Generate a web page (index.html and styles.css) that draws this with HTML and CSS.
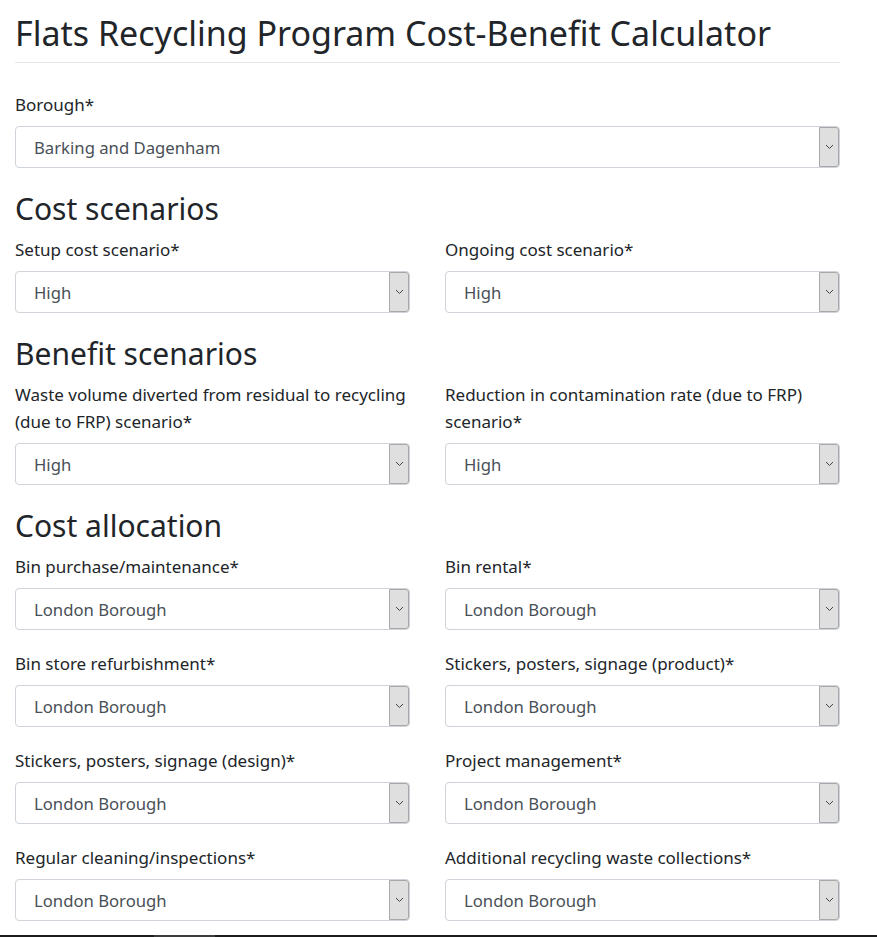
FILE: index.html
```html
<!DOCTYPE html>
<html>
<head>
<meta charset="utf-8">
<link rel="stylesheet" href="styles.css">
</head>
<body>
<div class="container">
  <h1 class="title">Flats Recycling Program Cost-Benefit Calculator</h1>
  <hr class="rule">

  <div class="field">
    <label class="label">Borough*</label>
    <div class="select"><span class="value">Barking and Dagenham</span><span class="arrow"><svg width="9" height="6" viewBox="0 0 9 6"><path d="M1 1 L4.5 4.5 L8 1" fill="none" stroke="#444" stroke-width="1"/></svg></span></div>
  </div>

  <h2 class="section">Cost scenarios</h2>
  <div class="row">
    <div class="field">
      <label class="label">Setup cost scenario*</label>
      <div class="select"><span class="value">High</span><span class="arrow"><svg width="9" height="6" viewBox="0 0 9 6"><path d="M1 1 L4.5 4.5 L8 1" fill="none" stroke="#444" stroke-width="1"/></svg></span></div>
    </div>
    <div class="field">
      <label class="label">Ongoing cost scenario*</label>
      <div class="select"><span class="value">High</span><span class="arrow"><svg width="9" height="6" viewBox="0 0 9 6"><path d="M1 1 L4.5 4.5 L8 1" fill="none" stroke="#444" stroke-width="1"/></svg></span></div>
    </div>
  </div>

  <h2 class="section">Benefit scenarios</h2>
  <div class="row">
    <div class="field">
      <label class="label">Waste volume diverted from residual to recycling (due to FRP) scenario*</label>
      <div class="select"><span class="value">High</span><span class="arrow"><svg width="9" height="6" viewBox="0 0 9 6"><path d="M1 1 L4.5 4.5 L8 1" fill="none" stroke="#444" stroke-width="1"/></svg></span></div>
    </div>
    <div class="field">
      <label class="label">Reduction in contamination rate (due to FRP) scenario*</label>
      <div class="select"><span class="value">High</span><span class="arrow"><svg width="9" height="6" viewBox="0 0 9 6"><path d="M1 1 L4.5 4.5 L8 1" fill="none" stroke="#444" stroke-width="1"/></svg></span></div>
    </div>
  </div>

  <h2 class="section">Cost allocation</h2>
  <div class="row">
    <div class="field">
      <label class="label">Bin purchase/maintenance*</label>
      <div class="select"><span class="value">London Borough</span><span class="arrow"><svg width="9" height="6" viewBox="0 0 9 6"><path d="M1 1 L4.5 4.5 L8 1" fill="none" stroke="#444" stroke-width="1"/></svg></span></div>
    </div>
    <div class="field">
      <label class="label">Bin rental*</label>
      <div class="select"><span class="value">London Borough</span><span class="arrow"><svg width="9" height="6" viewBox="0 0 9 6"><path d="M1 1 L4.5 4.5 L8 1" fill="none" stroke="#444" stroke-width="1"/></svg></span></div>
    </div>
    <div class="field">
      <label class="label">Bin store refurbishment*</label>
      <div class="select"><span class="value">London Borough</span><span class="arrow"><svg width="9" height="6" viewBox="0 0 9 6"><path d="M1 1 L4.5 4.5 L8 1" fill="none" stroke="#444" stroke-width="1"/></svg></span></div>
    </div>
    <div class="field">
      <label class="label">Stickers, posters, signage (product)*</label>
      <div class="select"><span class="value">London Borough</span><span class="arrow"><svg width="9" height="6" viewBox="0 0 9 6"><path d="M1 1 L4.5 4.5 L8 1" fill="none" stroke="#444" stroke-width="1"/></svg></span></div>
    </div>
    <div class="field">
      <label class="label">Stickers, posters, signage (design)*</label>
      <div class="select"><span class="value">London Borough</span><span class="arrow"><svg width="9" height="6" viewBox="0 0 9 6"><path d="M1 1 L4.5 4.5 L8 1" fill="none" stroke="#444" stroke-width="1"/></svg></span></div>
    </div>
    <div class="field">
      <label class="label">Project management*</label>
      <div class="select"><span class="value">London Borough</span><span class="arrow"><svg width="9" height="6" viewBox="0 0 9 6"><path d="M1 1 L4.5 4.5 L8 1" fill="none" stroke="#444" stroke-width="1"/></svg></span></div>
    </div>
    <div class="field">
      <label class="label">Regular cleaning/inspections*</label>
      <div class="select"><span class="value">London Borough</span><span class="arrow"><svg width="9" height="6" viewBox="0 0 9 6"><path d="M1 1 L4.5 4.5 L8 1" fill="none" stroke="#444" stroke-width="1"/></svg></span></div>
    </div>
    <div class="field">
      <label class="label">Additional recycling waste collections*</label>
      <div class="select"><span class="value">London Borough</span><span class="arrow"><svg width="9" height="6" viewBox="0 0 9 6"><path d="M1 1 L4.5 4.5 L8 1" fill="none" stroke="#444" stroke-width="1"/></svg></span></div>
    </div>
  </div>
</div>
<div class="bottombar"><span class="thumb"></span></div>
</body>
</html>
```

FILE: styles.css
```css
html, body {
  margin: 0;
  padding: 0;
  background: #fff;
  overflow: hidden;
}
body {
  font-family: "Noto Sans", "Open Sans", sans-serif;
  color: #212529;
}
.container {
  width: 825px;
  margin-left: 15px;
}
.title {
  font-size: 34px;
  font-weight: 400;
  line-height: 42px;
  margin: 12px 0 0 0;
}
.rule {
  border: 0;
  border-top: 1px solid #e6e6e6;
  margin: 8px 0 28px 0;
}
.section {
  font-size: 30px;
  font-weight: 400;
  line-height: 36px;
  margin: 23px 0 9px 0;
}
.row {
  display: grid;
  grid-template-columns: 395px 395px;
  column-gap: 35px;
  row-gap: 20px;
}
.label {
  display: block;
  font-size: 17px;
  line-height: 27px;
  margin-bottom: 8px;
}
.select {
  height: 42px;
  box-sizing: border-box;
  border: 1px solid #ced4da;
  border-radius: 4px;
  display: flex;
  align-items: center;
  justify-content: space-between;
  background: #fff;
}
.value {
  font-size: 16.7px;
  color: #495057;
  padding-left: 18px;
}
.arrow {
  width: 20px;
  height: 40px;
  box-sizing: border-box;
  background: #dfdfdf;
  border: 1px solid #a8a8a8;
  border-radius: 0 3px 3px 0;
  display: flex;
  align-items: center;
  justify-content: center;
}
.bottombar {
  position: fixed;
  left: 0;
  right: 0;
  bottom: 0;
  height: 2px;
  background: #1c1c1c;
}
.thumb {
  position: absolute;
  left: 154px;
  width: 61px;
  top: 0;
  height: 2px;
  background: #3c3c3c;
}
```
